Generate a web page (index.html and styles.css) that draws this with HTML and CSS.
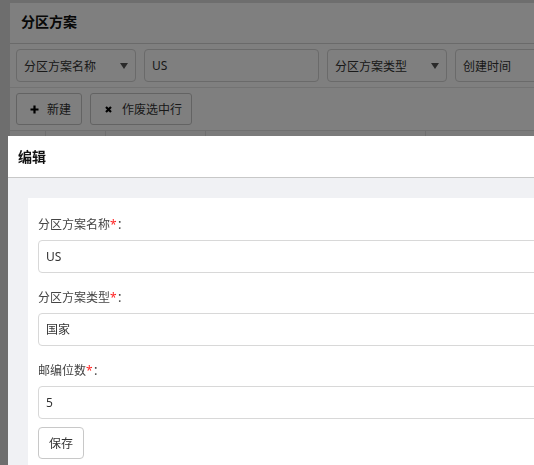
FILE: index.html
```html
<!DOCTYPE html>
<html lang="zh">
<head>
<meta charset="utf-8">
<title>分区方案</title>
<link rel="stylesheet" href="styles.css">
</head>
<body>
<div class="page">
  <div class="panel">
    <div class="panel-head">分区方案</div>
    <div class="search-row">
      <div class="sel w120"><span>分区方案名称</span><i class="caret"></i></div>
      <div class="inp w175">US</div>
      <div class="sel w120"><span>分区方案类型</span><i class="caret"></i></div>
      <div class="inp w175">创建时间</div>
    </div>
    <div class="toolbar">
      <button class="btn btn-add"><svg class="ico-plus" viewBox="0 0 9 9"><path d="M4.5 0.5v8M0.5 4.5h8" stroke="#000" stroke-width="2.2"/></svg>新建</button>
      <button class="btn btn-del"><svg class="ico-x" viewBox="0 0 7 7"><path d="M1 1l5 5M6 1l-5 5" stroke="#000" stroke-width="2.2"/></svg>作废选中行</button>
    </div>
    <div class="table-head">
      <div class="th c1"></div><div class="th c2"></div><div class="th c3"></div><div class="th c4"></div><div class="th c5"></div>
    </div>
  </div>
</div>
<div class="overlay"></div>
<div class="modal">
  <div class="modal-head">编辑</div>
  <div class="modal-body">
    <div class="card">
      <div class="field">
        <label class="lbl">分区方案名称<em>*</em>：</label>
        <div class="field-inp">US</div>
      </div>
      <div class="field">
        <label class="lbl">分区方案类型<em>*</em>：</label>
        <div class="field-inp">国家</div>
      </div>
      <div class="field last">
        <label class="lbl">邮编位数<em>*</em>：</label>
        <div class="field-inp">5</div>
      </div>
      <button class="save">保存</button>
    </div>
  </div>
</div>
</body>
</html>
```

FILE: styles.css
```css
html, body {
  margin: 0;
  padding: 0;
  height: 100%;
  overflow: hidden;
}
body {
  background: #dcdcdc;
  font-family: "Noto Sans", "Noto Sans CJK SC", sans-serif;
  font-size: 12px;
  color: #333;
}
.page {
  padding: 3px 0 0 10px;
}
.panel {
  background: #fff;
  width: 700px;
  height: 470px;
}
.panel-head {
  height: 40px;
  line-height: 38px;
  padding-left: 11px;
  font-weight: bold;
  font-size: 14px;
  color: #111;
  border-bottom: 1px solid #d4d4d4;
}
.search-row {
  display: flex;
  gap: 8px;
  padding: 5px 6px 5px;
  border-bottom: 1px solid #e6e6e6;
}
.sel, .inp {
  box-sizing: border-box;
  height: 33px;
  border: 1px solid #d4d4d4;
  border-radius: 4px;
  display: flex;
  align-items: center;
  padding: 0 7px;
  color: #333;
}
.sel { justify-content: space-between; }
.w120 { width: 120px; }
.w175 { width: 175px; }
.caret {
  width: 0;
  height: 0;
  border-left: 4.5px solid transparent;
  border-right: 4.5px solid transparent;
  border-top: 6px solid #555;
  margin-right: 0;
}
.toolbar {
  display: flex;
  gap: 8px;
  padding: 5px 6px 5px;
}
.btn {
  box-sizing: border-box;
  height: 32px;
  border: 1px solid #c6c6c6;
  border-radius: 3px;
  background: #fff;
  font-family: inherit;
  font-size: 12px;
  color: #333;
  display: flex;
  align-items: center;
}
.btn-add {
  width: 66px;
  padding: 0 0 0 13px;
  gap: 8px;
}
.btn-del {
  width: 102px;
  padding: 0 0 0 14px;
  gap: 10px;
}
.ico-plus { width: 9px; height: 9px; }
.ico-x { width: 7px; height: 7px; }
.table-head {
  display: flex;
  height: 30px;
  border-top: 1px solid #e0e0e0;
  background: #f7f7f7;
}
.th {
  border-right: 1px solid #dedede;
  height: 100%;
}
.c1 { width: 35px; }
.c2 { width: 59px; }
.c3 { width: 99px; }
.c4 { width: 219px; }
.c5 { flex: 1; border-right: none; }

.overlay {
  position: fixed;
  inset: 0;
  background: rgba(0, 0, 0, 0.5);
}
.modal {
  position: absolute;
  left: 8px;
  top: 136px;
  width: 700px;
  height: 400px;
  background: #fff;
}
.modal-head {
  height: 41px;
  line-height: 41px;
  padding-left: 10px;
  font-weight: bold;
  font-size: 14px;
  color: #111;
  border-bottom: 1px solid #c8c8c8;
}
.modal-body {
  background: #f0f1f4;
  padding: 20px 0 0 20px;
  height: 400px;
}
.card {
  background: #fff;
  padding: 17px 10px 10px;
  height: 400px;
}
.field {
  margin-bottom: 15px;
}
.field.last { margin-bottom: 8px; }
.lbl {
  display: block;
  height: 20px;
  line-height: 20px;
  margin-bottom: 5px;
  color: #444;
}
.lbl em {
  font-style: normal;
  color: #f22;
}
.field-inp {
  box-sizing: border-box;
  height: 33px;
  border: 1px solid #d8d8d8;
  border-radius: 4px;
  padding: 0 7px;
  line-height: 31px;
  color: #333;
}
.save {
  box-sizing: border-box;
  width: 46px;
  height: 32px;
  border: 1px solid #c8c8c8;
  border-radius: 4px;
  background: #fff;
  font-family: inherit;
  font-size: 12px;
  color: #333;
  padding: 0;
}
```
